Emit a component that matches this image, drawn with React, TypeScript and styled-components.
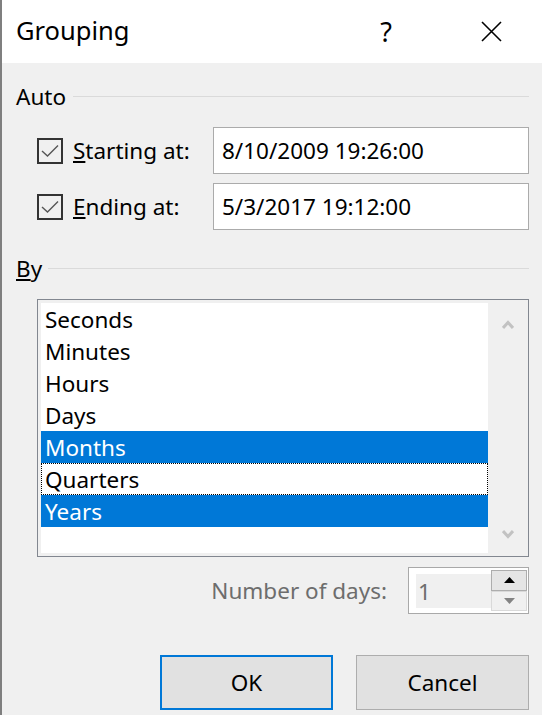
import React from "react";
import styled, { createGlobalStyle, css } from "styled-components";

const Global = createGlobalStyle`
  html, body { margin: 0; padding: 0; background: #f0f0f0; }
  body { font-family: "Noto Sans", "Segoe UI", sans-serif; color: #000; }
  * { box-sizing: border-box; }
`;

const FS = "22.5px";

const Window = styled.div`
  width: 542px;
  height: 715px;
  border-left: 2px solid #7f7f7f;
  background: #f0f0f0;
  display: flex;
  flex-direction: column;
  overflow: hidden;
`;

const TitleBar = styled.div`
  height: 63px;
  background: #fff;
  display: flex;
  align-items: center;
  padding-left: 14px;
  padding-right: 21px;
`;

const Title = styled.div`
  flex: 1;
  font-size: 25.5px;
  line-height: 1;
  padding-bottom: 1px;
`;

const TitleButton = styled.div`
  width: 60px;
  height: 40px;
  display: flex;
  align-items: center;
  justify-content: center;
  font-size: 27px;
  line-height: 1;
`;

const TitleButtons = styled.div`
  display: flex;
  gap: 45px;
`;

const Body = styled.div`
  flex: 1;
  display: flex;
  flex-direction: column;
  padding: 0 13px 0 14px;
`;

const GroupHeader = styled.div<{ $top: number }>`
  margin-top: ${(p) => p.$top}px;
  height: 30px;
  display: flex;
  align-items: center;
  font-size: ${FS};
`;

const HeaderLine = styled.div<{ $gap: number }>`
  flex: 1;
  height: 1px;
  background: #dadada;
  margin-left: ${(p) => p.$gap}px;
`;

const Fields = styled.div`
  margin-top: 16px;
  display: flex;
  flex-direction: column;
  gap: 9px;
`;

const FieldRow = styled.div`
  display: grid;
  grid-template-columns: 197px 1fr;
  height: 47px;
  align-items: center;
`;

const CheckLabel = styled.div`
  display: flex;
  align-items: center;
  gap: 10px;
  padding-left: 21px;
  font-size: ${FS};
`;

const CheckBox = styled.div`
  width: 26px;
  height: 26px;
  border: 2px solid #333;
  display: flex;
  align-items: center;
  justify-content: center;
`;

const TextField = styled.div`
  height: 47px;
  border: 1px solid #ababab;
  background: #fff;
  display: flex;
  align-items: center;
  padding-left: 8px;
  font-size: ${FS};
`;

const ListBox = styled.div`
  margin-top: 16px;
  margin-left: 21px;
  height: 258px;
  border: 1px solid #828790;
  padding: 3px 1px 3px 3px;
  display: flex;
  background: #f0f0f0;
`;

const ListItems = styled.div`
  flex: 1;
  background: #fff;
  display: flex;
  flex-direction: column;
`;

const ListRow = styled.div<{ $selected?: boolean; $focused?: boolean }>`
  height: 32px;
  line-height: 30px;
  padding: 2px 0 0 4px;
  font-size: ${FS};
  ${(p) =>
    p.$selected &&
    css`
      background: #0078d7;
      color: #fff;
    `}
  ${(p) =>
    p.$focused &&
    css`
      outline: 1px dotted #000;
      outline-offset: -1px;
    `}
`;

const ScrollBar = styled.div`
  width: 39px;
  display: flex;
  flex-direction: column;
  justify-content: space-between;
  align-items: center;
  padding: 17px 0 14px;
`;

const SpinRow = styled.div`
  margin-top: 10px;
  display: flex;
  justify-content: flex-end;
  align-items: center;
  gap: 21px;
`;

const DisabledLabel = styled.div`
  font-size: ${FS};
  color: #6d6d6d;
`;

const SpinBox = styled.div`
  width: 121px;
  height: 47px;
  border: 1px solid #a9a9a9;
  background: #fff;
  display: flex;
  padding: 2px 1px 2px 7px;
`;

const SpinField = styled.div`
  flex: 1;
  margin: 4px 0 3px;
  background: #f0f0f0;
  color: #6d6d6d;
  font-size: ${FS};
  padding-left: 2px;
  display: flex;
  align-items: center;
`;

const SpinButtons = styled.div`
  width: 36px;
  display: flex;
  flex-direction: column;
`;

const SpinButton = styled.div<{ $enabled?: boolean }>`
  flex: 1;
  display: flex;
  align-items: center;
  justify-content: center;
  border: 1px solid ${(p) => (p.$enabled ? "#adadad" : "#d9d9d9")};
  background: ${(p) => (p.$enabled ? "#e5e5e5" : "#f0f0f0")};
`;

const ButtonRow = styled.div`
  margin-top: 41px;
  display: flex;
  justify-content: flex-end;
  gap: 23px;
`;

const DialogButton = styled.div<{ $default?: boolean }>`
  width: 173px;
  height: 55px;
  display: flex;
  align-items: center;
  justify-content: center;
  background: #e1e1e1;
  font-size: ${FS};
  border: ${(p) => (p.$default ? "2px solid #0078d7" : "1px solid #adadad")};
`;

const CheckMark = () => (
  <svg width="22" height="22" viewBox="0 0 22 22">
    <polyline points="3,11 8.5,16 19,5.5" fill="none" stroke="#555" strokeWidth="1.4" />
  </svg>
);

const CloseIcon = () => (
  <svg width="21" height="21" viewBox="0 0 21 21">
    <path d="M1 1 L20 20 M20 1 L1 20" stroke="#000" strokeWidth="1.6" />
  </svg>
);

const Chevron = ({ up }: { up?: boolean }) => (
  <svg width="12" height="9" viewBox="0 0 12 9">
    <polyline
      points={up ? "1,8 6,2.5 11,8" : "1,1 6,6.5 11,1"}
      fill="none"
      stroke="#c2c2c2"
      strokeWidth="3"
    />
  </svg>
);

const Triangle = ({ up, color }: { up?: boolean; color: string }) => (
  <svg width="11" height="6" viewBox="0 0 11 6">
    <polygon points={up ? "0,6 5.5,0 11,6" : "0,0 5.5,6 11,0"} fill={color} />
  </svg>
);

const items = ["Seconds", "Minutes", "Hours", "Days", "Months", "Quarters", "Years"];
const selected = new Set(["Months", "Years"]);

export default function App() {
  return (
    <>
      <Global />
      <Window>
        <TitleBar>
          <Title>Grouping</Title>
          <TitleButtons>
            <TitleButton>?</TitleButton>
            <TitleButton>
              <CloseIcon />
            </TitleButton>
          </TitleButtons>
        </TitleBar>
        <Body>
          <GroupHeader $top={18}>
            <span>Auto</span>
            <HeaderLine $gap={7} />
          </GroupHeader>
          <Fields>
            <FieldRow>
              <CheckLabel>
                <CheckBox>
                  <CheckMark />
                </CheckBox>
                <span>
                  <u>S</u>tarting at:
                </span>
              </CheckLabel>
              <TextField>8/10/2009 19:26:00</TextField>
            </FieldRow>
            <FieldRow>
              <CheckLabel>
                <CheckBox>
                  <CheckMark />
                </CheckBox>
                <span>
                  <u>E</u>nding at:
                </span>
              </CheckLabel>
              <TextField>5/3/2017 19:12:00</TextField>
            </FieldRow>
          </Fields>
          <GroupHeader $top={23}>
            <span>
              <u>B</u>y
            </span>
            <HeaderLine $gap={6} />
          </GroupHeader>
          <ListBox>
            <ListItems>
              {items.map((it) => (
                <ListRow key={it} $selected={selected.has(it)} $focused={it === "Quarters"}>
                  {it}
                </ListRow>
              ))}
            </ListItems>
            <ScrollBar>
              <Chevron up />
              <Chevron />
            </ScrollBar>
          </ListBox>
          <SpinRow>
            <DisabledLabel>Number of days:</DisabledLabel>
            <SpinBox>
              <SpinField>1</SpinField>
              <SpinButtons>
                <SpinButton $enabled>
                  <Triangle up color="#000" />
                </SpinButton>
                <SpinButton>
                  <Triangle color="#838383" />
                </SpinButton>
              </SpinButtons>
            </SpinBox>
          </SpinRow>
          <ButtonRow>
            <DialogButton $default>OK</DialogButton>
            <DialogButton>Cancel</DialogButton>
          </ButtonRow>
        </Body>
      </Window>
    </>
  );
}
